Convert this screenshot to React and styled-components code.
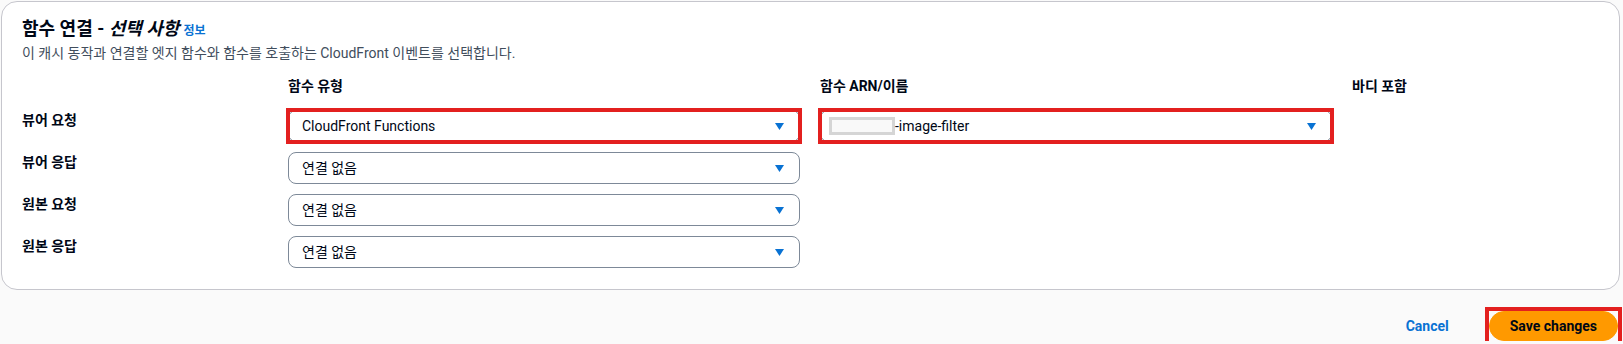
import React from "react";
import styled, { createGlobalStyle } from "styled-components";

const GlobalStyle = createGlobalStyle`
  html, body {
    margin: 0;
    padding: 0;
    background: #fafafa;
  }
  body {
    font-family: Roboto, "Noto Sans CJK KR", "Noto Sans", sans-serif;
    color: #000716;
    -webkit-font-smoothing: antialiased;
  }
`;

const Page = styled.div`
  padding: 1px 3px 0 1px;
`;

const Card = styled.section`
  background: #ffffff;
  border: 1px solid #c6c6cd;
  border-radius: 16px;
  padding: 16px 20px 21px 20px;
`;

const TitleRow = styled.h2`
  margin: 0;
  display: flex;
  align-items: baseline;
  gap: 4px;
  font-size: 18px;
  line-height: 22px;
  font-weight: 700;
  color: #000716;
`;

const Italic = styled.i`
  font-style: italic;
`;

const InfoLink = styled.a`
  font-size: 12px;
  font-weight: 700;
  color: #0972d3;
  text-decoration: none;
`;

const Description = styled.p`
  margin: 1px 0 0;
  font-size: 14px;
  line-height: 20px;
  color: #414d5c;
`;

const FormGrid = styled.div`
  margin-top: 13px;
  display: grid;
  grid-template-columns: 246px 512px 512px 1fr;
  column-gap: 20px;
  row-gap: 10px;
`;

const ColumnHeader = styled.div`
  font-size: 14px;
  line-height: 20px;
  font-weight: 700;
  color: #000716;
  margin-bottom: 4px;
`;

const RowLabel = styled.div`
  font-size: 14px;
  line-height: 20px;
  font-weight: 700;
  color: #000716;
  align-self: start;
`;

const Highlight = styled.div`
  position: relative;
  &::after {
    content: "";
    position: absolute;
    inset: ${(p) => p.$inset ?? -2}px;
    border: ${(p) => p.$width ?? 4}px solid #e3201f;
    pointer-events: none;
  }
`;

const SelectBox = styled.div`
  box-sizing: border-box;
  height: 32px;
  display: flex;
  align-items: center;
  justify-content: space-between;
  padding: 0 15px 0 13px;
  border: 1px solid #7d8998;
  border-radius: 8px;
  background: #ffffff;
  font-size: 14px;
  line-height: 20px;
  color: #000716;
`;

const Value = styled.span`
  display: flex;
  align-items: center;
`;

const Redacted = styled.span`
  box-sizing: border-box;
  display: inline-block;
  width: 66px;
  height: 18px;
  border: 3px solid #d5d5d5;
  background: #f9f9f9;
  margin-left: -5px;
`;

const Caret = () => (
  <svg width="9" height="7" viewBox="0 0 9 7" aria-hidden="true">
    <polygon points="0,0 9,0 4.5,7" fill="#0972d3" />
  </svg>
);

const Footer = styled.div`
  display: flex;
  justify-content: flex-end;
  align-items: center;
  gap: 20px;
  padding: 21px 2px 0 0;
`;

const LinkButton = styled.button`
  background: none;
  border: none;
  padding: 5px 20px;
  font-family: inherit;
  font-size: 14px;
  line-height: 20px;
  font-weight: 700;
  color: #0972d3;
  cursor: pointer;
`;

const PrimaryButton = styled.button`
  display: block;
  box-sizing: border-box;
  height: 30px;
  background: #ff9900;
  border: 1px solid #ff9900;
  border-radius: 20px;
  padding: 0 20px;
  font-family: inherit;
  font-size: 14px;
  line-height: 20px;
  font-weight: 700;
  color: #000716;
  cursor: pointer;
`;

function Select({ children }) {
  return (
    <SelectBox>
      <Value>{children}</Value>
      <Caret />
    </SelectBox>
  );
}

const rows = ["뷰어 응답", "원본 요청", "원본 응답"];

export default function App() {
  return (
    <Page>
      <GlobalStyle />
      <Card>
        <TitleRow>
          <span>
            함수 연결 - <Italic>선택 사항</Italic>
          </span>
          <InfoLink href="#">정보</InfoLink>
        </TitleRow>
        <Description>
          이 캐시 동작과 연결할 엣지 함수와 함수를 호출하는 CloudFront 이벤트를 선택합니다.
        </Description>
        <FormGrid>
          <div />
          <ColumnHeader>함수 유형</ColumnHeader>
          <ColumnHeader>함수 ARN/이름</ColumnHeader>
          <ColumnHeader>바디 포함</ColumnHeader>

          <RowLabel>뷰어 요청</RowLabel>
          <Highlight>
            <Select>CloudFront Functions</Select>
          </Highlight>
          <Highlight>
            <Select>
              <Redacted />
              -image-filter
            </Select>
          </Highlight>
          <div />

          {rows.map((r) => (
            <React.Fragment key={r}>
              <RowLabel>{r}</RowLabel>
              <Select>연결 없음</Select>
              <div />
              <div />
            </React.Fragment>
          ))}
        </FormGrid>
      </Card>
      <Footer>
        <LinkButton>Cancel</LinkButton>
        <Highlight $inset={-4} $width={4}>
          <PrimaryButton>Save changes</PrimaryButton>
        </Highlight>
      </Footer>
    </Page>
  );
}
